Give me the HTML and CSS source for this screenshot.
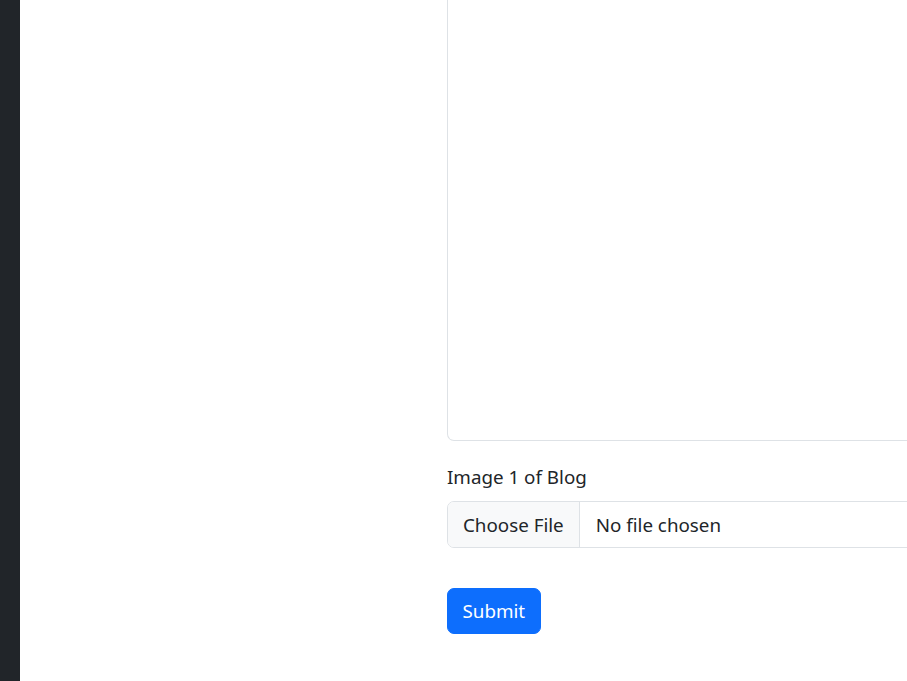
FILE: index.html
```html
<!DOCTYPE html>
<html lang="en">
<head>
<meta charset="utf-8">
<title>New Blog</title>
<link rel="stylesheet" href="styles.css">
</head>
<body>
<div class="layout">
  <aside class="sidebar"></aside>
  <main class="main">
    <form class="blog-form">
      <div class="field">
        <textarea class="textarea" aria-label="Blog content"></textarea>
      </div>
      <div class="field">
        <label class="label">Image 1 of Blog</label>
        <div class="file-input">
          <span class="file-btn">Choose File</span>
          <span class="file-name">No file chosen</span>
        </div>
      </div>
      <div class="actions">
        <button type="button" class="btn-submit">Submit</button>
      </div>
    </form>
  </main>
</div>
</body>
</html>
```
FILE: styles.css
```css
html, body {
  margin: 0;
  padding: 0;
  height: 100%;
  overflow: hidden;
  background: #ffffff;
}
body {
  font-family: "Noto Sans", "Open Sans", sans-serif;
  font-size: 18.8px;
  line-height: 30px;
  color: #212529;
}
.layout {
  display: flex;
  height: 681px;
}
.sidebar {
  width: 20px;
  flex: 0 0 20px;
  background: #212529;
}
.main {
  flex: 1;
  min-width: 0;
  overflow: hidden;
  padding-left: 427px;
}
.blog-form {
  width: 620px;
  display: flex;
  flex-direction: column;
}
.field {
  margin-bottom: 20px;
  display: flex;
  flex-direction: column;
}
.textarea {
  box-sizing: border-box;
  height: 441px;
  width: 100%;
  border: 1px solid #dee2e6;
  border-top: 0;
  border-radius: 0 0 7px 7px;
  resize: none;
  font: inherit;
  padding: 7px 15px;
  margin: 0;
  display: block;
}
.label {
  margin-bottom: 10px;
  line-height: 30px;
  padding-top: 1px;
}
.file-input {
  display: flex;
  border: 1px solid #dee2e6;
  border-radius: 7px;
  overflow: hidden;
  height: 47px;
  box-sizing: border-box;
  margin-top: -1px;
}
.file-btn {
  background: #f8f9fa;
  border-right: 1px solid #dee2e6;
  padding: 8px 15px 7px;
  line-height: 30px;
}
.file-name {
  padding: 8px 16px 7px;
  line-height: 30px;
}
.actions {
  padding-top: 20px;
}
.btn-submit {
  font: inherit;
  line-height: 30px;
  color: #ffffff;
  background: #0d6efd;
  border: 1px solid #0d6efd;
  border-radius: 7px;
  padding: 7px 14.5px;
  cursor: pointer;
}
```
